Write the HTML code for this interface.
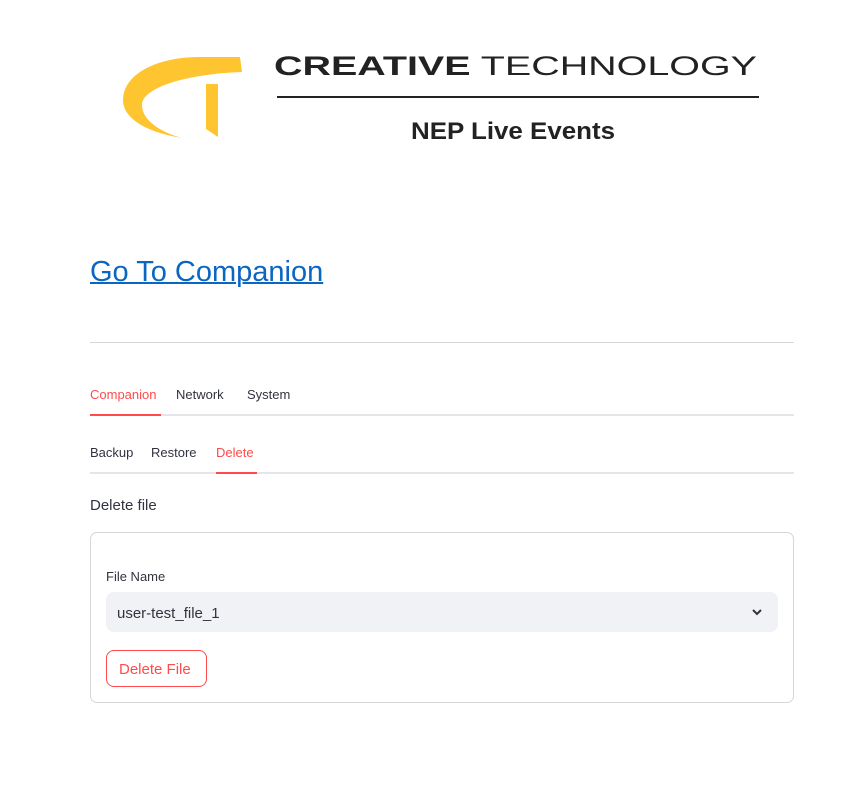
<!DOCTYPE html>
<html><head><style>
body{margin:0;background:#fff;font-family:"Liberation Sans",sans-serif;color:#31333f;}
.a{position:absolute;white-space:nowrap}
</style></head><body>
<svg class="a" style="left:0;top:0" width="867" height="160">
<path d="M182 138 C145 132 123 118 123 100 C123 75 155 57 200 57 L240 57 L242 72 C185 74 142 88 142 105 C142 120 160 132 182 138 Z" fill="#FFC531"/>
<path d="M206 84 L218 84 L218 137 L206 129 Z" fill="#FFC531"/>
<text x="274" y="75" font-family="Liberation Sans" font-size="27" fill="#222" textLength="483" lengthAdjust="spacingAndGlyphs"><tspan font-weight="bold">CREATIVE</tspan> TECHNOLOGY</text>
<rect x="277" y="96" width="482" height="2" fill="#222"/>
<text x="411" y="139" font-family="Liberation Sans" font-weight="bold" font-size="24" fill="#222" textLength="204" lengthAdjust="spacingAndGlyphs">NEP Live Events</text>
</svg>
<div class="a" style="left:90px;top:256px;font-size:29px;color:#0b66c2;text-decoration:underline;text-decoration-thickness:2px">Go To Companion</div>
<div class="a" style="left:90px;top:342px;width:704px;height:1px;background:#d6d6d9"></div>
<div class="a" style="left:90px;top:414px;width:704px;height:2px;background:#e6e6ea"></div>
<div class="a" style="left:90px;top:414px;width:71px;height:2px;background:#ff4b4b"></div>
<div class="a" style="left:90px;top:387px;font-size:13px;color:#ff4b4b">Companion</div>
<div class="a" style="left:176px;top:387px;font-size:13px">Network</div>
<div class="a" style="left:247px;top:387px;font-size:13px">System</div>
<div class="a" style="left:90px;top:472px;width:704px;height:2px;background:#e6e6ea"></div>
<div class="a" style="left:216px;top:472px;width:41px;height:2px;background:#ff4b4b"></div>
<div class="a" style="left:90px;top:445px;font-size:13px">Backup</div>
<div class="a" style="left:151px;top:445px;font-size:13px">Restore</div>
<div class="a" style="left:216px;top:445px;font-size:13px;color:#ff4b4b">Delete</div>
<div class="a" style="left:90px;top:497px;font-size:15px">Delete file</div>
<div class="a" style="left:90px;top:532px;width:702px;height:169px;border:1px solid #d6d6d9;border-radius:7px"></div>
<div class="a" style="left:106px;top:569px;font-size:13px">File Name</div>
<div class="a" style="left:106px;top:592px;width:672px;height:40px;background:#f0f2f6;border-radius:8px"></div>
<div class="a" style="left:117px;top:605px;font-size:15px">user-test_file_1</div>
<svg class="a" style="left:750px;top:605px" width="14" height="14"><path d="M3 5 L7 9 L11 5" stroke="#31333f" stroke-width="2" fill="none"/></svg>
<div class="a" style="left:106px;top:650px;width:99px;height:35px;border:1px solid #ff4b4b;border-radius:8px;"></div>
<div class="a" style="left:119px;top:661px;font-size:15px;color:#ff4b4b">Delete File</div>
</body></html>
